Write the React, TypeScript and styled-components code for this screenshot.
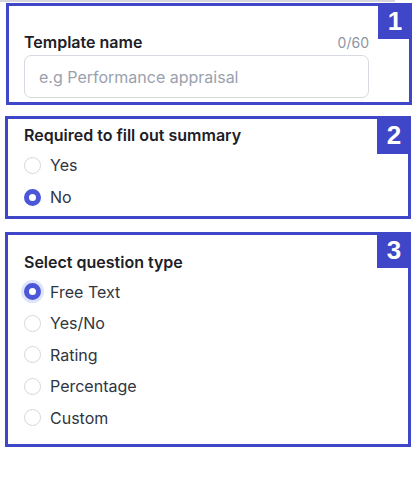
import styled, { createGlobalStyle } from "styled-components";

const GlobalStyle = createGlobalStyle`
  body {
    margin: 0;
    background: #ffffff;
    font-family: Inter, "Noto Sans", sans-serif;
  }
`;

const accent = "#4046c8";

const TopRule = styled.div`
  width: 395px;
  height: 2px;
  background: #d4d6db;
  margin-bottom: 1px;
`;

const Page = styled.div`
  width: 418px;
  display: flex;
  flex-direction: column;
`;

const Section = styled.section<{ $left: number; $top: number; $pad: string }>`
  position: relative;
  box-sizing: border-box;
  width: 406px;
  margin-left: ${(p) => p.$left}px;
  margin-top: ${(p) => p.$top}px;
  border: 3px solid ${accent};
  padding: ${(p) => p.$pad};
  display: flex;
  flex-direction: column;
`;

const Badge = styled.div<{ $h: number }>`
  position: absolute;
  top: -3px;
  right: -3px;
  width: 34px;
  height: ${(p) => p.$h}px;
  background: ${accent};
  color: #ffffff;
  font-family: "Liberation Sans", Arial, sans-serif;
  font-weight: 700;
  font-size: 26px;
  display: flex;
  align-items: center;
  justify-content: center;
`;

const LabelRow = styled.div`
  display: flex;
  align-items: center;
  justify-content: space-between;
  height: 20px;
  margin-bottom: 3px;
`;

const Label = styled.div`
  font-size: 16px;
  font-weight: 600;
  color: #1d2027;
  line-height: 20px;
`;

const Counter = styled.span`
  font-size: 14px;
  color: #8e96a3;
`;

const Input = styled.input`
  box-sizing: border-box;
  width: 345px;
  height: 43px;
  border: 1px solid #d6d9df;
  border-radius: 7px;
  padding: 0 14px;
  font-family: Inter, "Noto Sans", sans-serif;
  font-size: 16px;
  color: #1d2027;
  outline: none;

  &::placeholder {
    color: #9aa1ad;
  }
`;

const Options = styled.div<{ $row: number }>`
  display: flex;
  flex-direction: column;
  margin-top: 4px;

  & > label {
    height: ${(p) => p.$row}px;
  }
`;

const Option = styled.label`
  display: flex;
  align-items: center;
  gap: 9px;
  font-size: 16px;
  color: #2f3541;
  cursor: pointer;
`;

const Dot = styled.span<{ $on?: boolean; $focus?: boolean }>`
  box-sizing: border-box;
  width: 17px;
  height: 17px;
  border-radius: 50%;
  border: ${(p) => (p.$on ? `5px solid #4a57d6` : "1px solid #d3d7de")};
  background: #ffffff;
  box-shadow: ${(p) => (p.$focus ? "0 0 0 3px #dfe4fb" : "none")};
`;

export default function App() {
  const summary = ["Yes", "No"];
  const types = ["Free Text", "Yes/No", "Rating", "Percentage", "Custom"];

  return (
    <Page>
      <GlobalStyle />
      <TopRule />
      <Section $left={6} $top={0} $pad="26px 40px 4px 15px">
        <Badge $h={36}>1</Badge>
        <LabelRow>
          <Label>Template name</Label>
          <Counter>0/60</Counter>
        </LabelRow>
        <Input placeholder="e.g Performance appraisal" />
      </Section>

      <Section $left={5} $top={11} $pad="6px 40px 3px 16px">
        <Badge $h={38}>2</Badge>
        <Label>Required to fill out summary</Label>
        <Options $row={32}>
          {summary.map((s) => (
            <Option key={s}>
              <Dot $on={s === "No"} />
              {s}
            </Option>
          ))}
        </Options>
      </Section>

      <Section $left={5} $top={13} $pad="17px 40px 10px 16px">
        <Badge $h={36}>3</Badge>
        <Label>Select question type</Label>
        <Options $row={31.5}>
          {types.map((t, i) => (
            <Option key={t}>
              <Dot $on={i === 0} $focus={i === 0} />
              {t}
            </Option>
          ))}
        </Options>
      </Section>
    </Page>
  );
}
